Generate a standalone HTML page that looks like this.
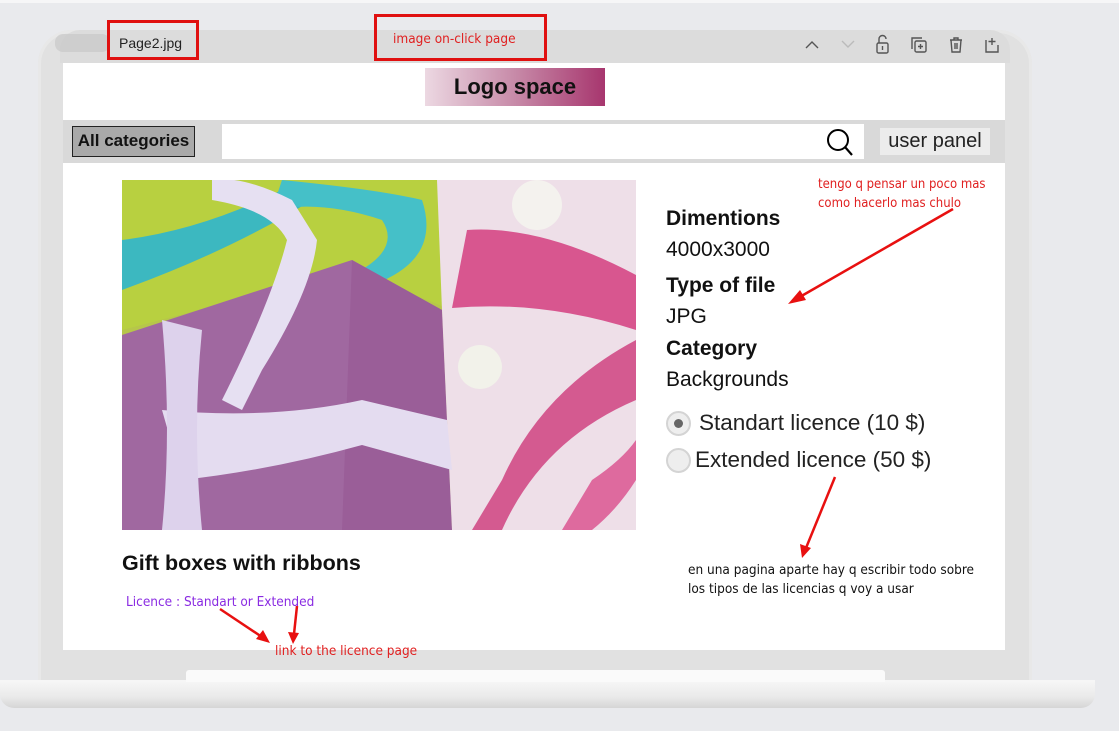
<!DOCTYPE html>
<html><head><meta charset="utf-8"><style>
*{margin:0;padding:0;box-sizing:border-box}
body{width:1119px;height:731px;background:#e9eaed;position:relative;overflow:hidden;font-family:"Liberation Sans",sans-serif}
.a{position:absolute}
.hand{font-family:"DejaVu Sans Condensed","Liberation Sans Narrow","Liberation Sans",sans-serif}
</style></head><body>
<div class="a" style="left:0;top:0;width:1119px;height:3px;background:#f6f6f7"></div>
<!-- laptop body -->
<div class="a" style="left:38px;top:30px;width:994px;height:660px;background:#e1e1e1;border-radius:34px 34px 10px 10px;box-shadow:inset 0 0 0 3px #e8e8e8"></div>
<div class="a" style="left:60px;top:30px;width:950px;height:33px;background:#dcdcdc;border-radius:20px 20px 0 0"></div>
<div class="a" style="left:55px;top:34px;width:55px;height:18px;background:#c4c4c4;border-radius:8px;opacity:.6"></div>
<!-- base -->
<div class="a" style="left:0;top:680px;width:1095px;height:28px;background:linear-gradient(#f7f7f7,#eaeaea 60%,#d5d5d5);border-radius:0 0 14px 14px"></div>
<div class="a" style="left:186px;top:670px;width:699px;height:12px;background:#fafafa;border-radius:3px 3px 0 0"></div>
<!-- screen -->
<div class="a" style="left:63px;top:63px;width:942px;height:587px;background:#fff"></div>
<div class="a" style="left:63px;top:120px;width:942px;height:43px;background:#d9d9d9"></div>
<div class="a" style="left:222px;top:124px;width:642px;height:35px;background:#fff"></div>
<div class="a" style="left:72px;top:126px;width:123px;height:31px;background:#a9a9a9;border:1.5px solid #222;font-weight:bold;font-size:17px;line-height:28px;text-align:center;color:#111">All categories</div>
<svg class="a" style="left:824px;top:127px" width="32" height="32" viewBox="0 0 32 32"><circle cx="14" cy="13" r="10" fill="none" stroke="#000" stroke-width="2"/><line x1="21" y1="20" x2="28" y2="28" stroke="#000" stroke-width="2.2"/></svg>
<div class="a" style="left:880px;top:128px;width:110px;height:27px;background:#ececec;font-size:20px;line-height:27px;text-align:center;color:#222">user panel</div>
<div class="a" style="left:425px;top:68px;width:180px;height:38px;background:linear-gradient(90deg,#ecd8e2,#c78aa8 50%,#a7366e);font-weight:bold;font-size:22px;line-height:38px;text-align:center;color:#111">Logo space</div>
<!-- top bar labels -->
<div class="a" style="left:107px;top:20px;width:92px;height:40px;border:3px solid #e01010"></div>
<div class="a" style="left:119px;top:35px;font-size:14px;color:#222">Page2.jpg</div>
<div class="a" style="left:374px;top:14px;width:173px;height:47px;border:3px solid #e01010"></div>
<div class="a hand" style="left:393px;top:31px;font-size:13.5px;color:#e02020">image on-click page</div>
<svg class="a" style="left:800px;top:30px" width="210" height="30" viewBox="0 0 210 30" fill="none" stroke="#555" stroke-width="1.4">
<path d="M6 18 L12 12 L18 18"/><path d="M42 11 L48 17 L54 11" stroke="#bbb"/>
<rect x="77" y="13" width="11" height="10" rx="1.5"/><path d="M79 13 V9 a3.5 3.5 0 0 1 7 0"/><line x1="82.5" y1="16" x2="82.5" y2="20"/>
<rect x="115" y="11" width="11" height="11" rx="1.5"/><path d="M112 19 V8 h10"/><path d="M120.5 14 v5 M118 16.5 h5"/>
<path d="M150 10 h12 M154 10 v-2 h4 v2 M151 10 l1 12 h8 l1-12 M155 13 v6 M157 13 v6"/>
<path d="M186 10 v12 h12 v-7 M192 8 v7 M188.5 11.5 h7"/>
</svg>
<!-- image -->
<svg class="a" style="left:122px;top:180px" width="514" height="350" viewBox="0 0 514 350">
<rect width="514" height="350" fill="#b6c64a"/>
<polygon points="0,0 320,0 330,130 230,90 0,150" fill="#b8d040"/>
<path d="M0 60 Q80 50 160 10 L190 20 Q110 70 0 110Z" fill="#3cb8c0"/>
<path d="M160 0 Q260 10 300 20 Q320 80 250 105 L230 95 Q280 70 260 40 Q200 20 150 30Z" fill="#45c0c8"/>
<polygon points="0,155 230,80 320,130 330,350 0,350" fill="#a068a0"/>
<polygon points="230,80 320,130 330,350 220,350" fill="#9a5e98"/>
<polygon points="315,0 514,0 514,350 330,350 320,130" fill="#eedfe8"/>
<circle cx="415" cy="25" r="25" fill="#f4f2ee"/><circle cx="358" cy="187" r="22" fill="#f2f2ea"/>
<path d="M345 50 Q420 45 514 95 L514 150 Q420 120 330 128Z" fill="#d8568f"/>
<path d="M514 160 Q420 210 380 300 L350 350 L380 350 Q420 260 514 220Z" fill="#d45a90"/>
<path d="M470 300 Q500 280 514 260 L514 300 Q495 330 470 350 L440 350Z" fill="#de6a9e"/>
<path d="M90 0 Q120 -5 170 20 L195 60 Q190 110 140 190 L120 230 L100 220 Q150 120 165 60 Q150 30 90 20Z" fill="#e6e0f2"/>
<path d="M40 230 Q150 240 240 220 L325 240 L330 290 L240 265 Q150 290 60 300Z" fill="#e4dcf0"/>
<path d="M40 140 L80 150 Q70 250 80 350 L40 350 Q50 250 40 140Z" fill="#ddd2ec"/>
</svg>
<div class="a" style="left:122px;top:551px;font-weight:bold;font-size:21.5px;color:#111">Gift boxes with ribbons</div>
<div class="a hand" style="left:126px;top:594px;font-size:13.5px;color:#8a2be2">Licence : Standart or Extended</div>
<div class="a hand" style="left:275px;top:643px;font-size:13.5px;color:#e02020">link to the licence page</div>
<!-- details -->
<div class="a" style="left:666px;top:203px;font-size:21px;line-height:31px;color:#111">
<b>Dimentions</b><br>4000x3000<br><div style="height:5px"></div><b>Type of file</b><br>JPG<br><div style="height:1px"></div><b>Category</b><br>Backgrounds</div>
<div class="a" style="left:666px;top:411px;width:25px;height:25px;border-radius:50%;background:#eee;border:2px solid #d4d4d4"></div>
<div class="a" style="left:674px;top:419px;width:9px;height:9px;border-radius:50%;background:#666"></div>
<div class="a" style="left:699px;top:410px;font-size:22.5px;color:#222">Standart licence (10 $)</div>
<div class="a" style="left:666px;top:448px;width:25px;height:25px;border-radius:50%;background:#eee;border:2px solid #d4d4d4"></div>
<div class="a" style="left:695px;top:447px;font-size:22.5px;color:#222">Extended licence (50 $)</div>
<div class="a hand" style="left:818px;top:175px;font-size:13px;line-height:19px;color:#e02020">tengo q pensar un poco mas<br>como hacerlo mas chulo</div>
<div class="a hand" style="left:688px;top:561px;font-size:13.5px;line-height:19px;color:#111">en una pagina aparte hay q escribir todo sobre<br>los tipos de las licencias q voy a usar</div>
<svg class="a" style="left:0;top:0" width="1119" height="731" fill="#e81010" stroke="#e81010" stroke-width="2.5">
<line x1="953" y1="209" x2="798" y2="298"/><polygon points="788,304 800,290 806,300" stroke="none"/>
<line x1="835" y1="477" x2="806" y2="548"/><polygon points="802,558 800,544 811,548" stroke="none"/>
<line x1="220" y1="609" x2="262" y2="637"/><polygon points="270,643 256,639 263,630" stroke="none"/>
<line x1="297" y1="606" x2="294" y2="634"/><polygon points="293,644 288,632 299,633" stroke="none"/>
</svg>
</body></html>
